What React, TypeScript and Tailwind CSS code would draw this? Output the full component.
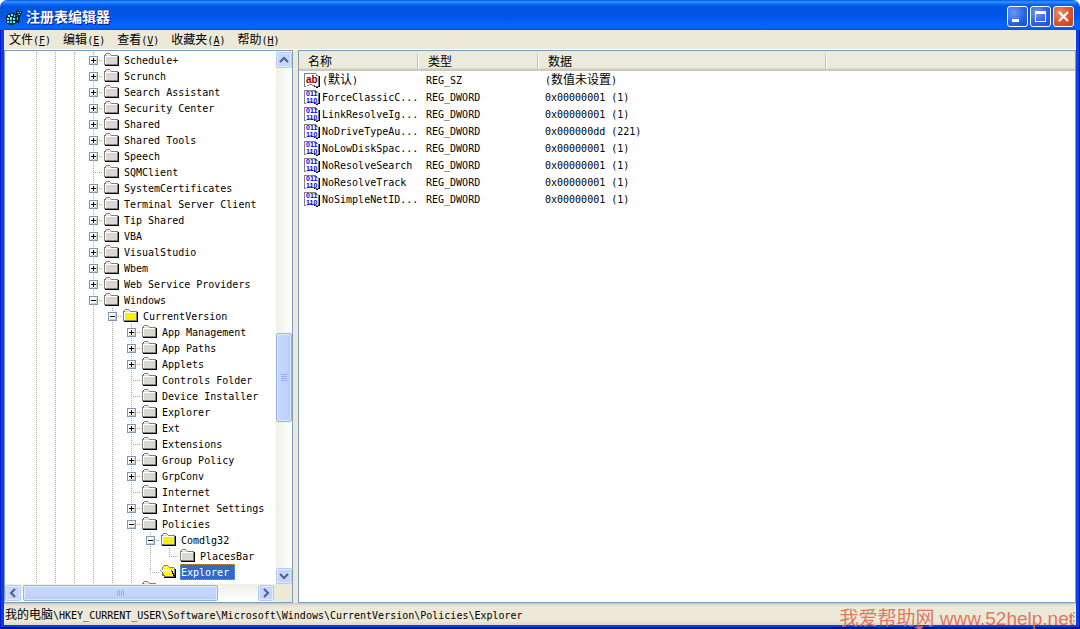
import React, { useId, useState } from 'react';

interface TreeNode {
  label: string;
  level: number;
  toggle?: 'plus' | 'minus';
  last?: boolean;
  open?: boolean;
}

interface RegValue {
  name: string;
  cjk?: boolean;
  type: string;
  data: string;
}

const menus = [
  { label: '文件', hotkey: 'F' },
  { label: '编辑', hotkey: 'E' },
  { label: '查看', hotkey: 'V' },
  { label: '收藏夹', hotkey: 'A' },
  { label: '帮助', hotkey: 'H' },
];

const nodes: TreeNode[] = [
  { label: 'Schedule+', level: 3, toggle: 'plus' },
  { label: 'Scrunch', level: 3, toggle: 'plus' },
  { label: 'Search Assistant', level: 3, toggle: 'plus' },
  { label: 'Security Center', level: 3, toggle: 'plus' },
  { label: 'Shared', level: 3, toggle: 'plus' },
  { label: 'Shared Tools', level: 3, toggle: 'plus' },
  { label: 'Speech', level: 3, toggle: 'plus' },
  { label: 'SQMClient', level: 3 },
  { label: 'SystemCertificates', level: 3, toggle: 'plus' },
  { label: 'Terminal Server Client', level: 3, toggle: 'plus' },
  { label: 'Tip Shared', level: 3, toggle: 'plus' },
  { label: 'VBA', level: 3, toggle: 'plus' },
  { label: 'VisualStudio', level: 3, toggle: 'plus' },
  { label: 'Wbem', level: 3, toggle: 'plus' },
  { label: 'Web Service Providers', level: 3, toggle: 'plus' },
  { label: 'Windows', level: 3, toggle: 'minus' },
  { label: 'CurrentVersion', level: 4, toggle: 'minus' },
  { label: 'App Management', level: 5, toggle: 'plus' },
  { label: 'App Paths', level: 5, toggle: 'plus' },
  { label: 'Applets', level: 5, toggle: 'plus' },
  { label: 'Controls Folder', level: 5 },
  { label: 'Device Installer', level: 5 },
  { label: 'Explorer', level: 5, toggle: 'plus' },
  { label: 'Ext', level: 5, toggle: 'plus' },
  { label: 'Extensions', level: 5 },
  { label: 'Group Policy', level: 5, toggle: 'plus' },
  { label: 'GrpConv', level: 5, toggle: 'plus' },
  { label: 'Internet', level: 5 },
  { label: 'Internet Settings', level: 5, toggle: 'plus' },
  { label: 'Policies', level: 5, toggle: 'minus' },
  { label: 'Comdlg32', level: 6, toggle: 'minus' },
  { label: 'PlacesBar', level: 7, last: true },
  { label: 'Explorer', level: 6, last: true, open: true },
  { label: '', level: 5 },
];

const values: RegValue[] = [
  { name: '默认', cjk: true, type: 'REG_SZ', data: '数值未设置' },
  { name: 'ForceClassicC...', type: 'REG_DWORD', data: '0x00000001 (1)' },
  { name: 'LinkResolveIg...', type: 'REG_DWORD', data: '0x00000001 (1)' },
  { name: 'NoDriveTypeAu...', type: 'REG_DWORD', data: '0x000000dd (221)' },
  { name: 'NoLowDiskSpac...', type: 'REG_DWORD', data: '0x00000001 (1)' },
  { name: 'NoResolveSearch', type: 'REG_DWORD', data: '0x00000001 (1)' },
  { name: 'NoResolveTrack', type: 'REG_DWORD', data: '0x00000001 (1)' },
  { name: 'NoSimpleNetID...', type: 'REG_DWORD', data: '0x00000001 (1)' },
];

const vDots = 'bg-[repeating-linear-gradient(to_bottom,#aca899_0_1px,transparent_1px_2px)]';
const hDots = 'bg-[repeating-linear-gradient(to_right,#aca899_0_1px,transparent_1px_2px)]';

const Cjk: React.FC<{ children: React.ReactNode }> = ({ children }) => (
  <span className="text-[12px]">{children}</span>
);

const AppIcon = () => (
  <svg width="16" height="16" viewBox="0 0 16 16" shapeRendering="crispEdges" aria-hidden="true">
    <path d="M1 6h1V5h2V4h5v1h1v2h1v7h-1v1H8v1H3v-1H1v-1H0V7h1z" fill="#06303a" />
    <path d="M10 2h1V1h2V0h1v2h2v3h-1v2h-1v5h-1v2h-2V6h-1z" fill="#06222e" />
    <path d="M2 6h2v2H2zM5 5h2v2H5zM8 6h1v2H8zM1 9h2v2H1zM4 8h2v3H4zM7 9h2v2H7zM1 12h2v2H1zM4 12h2v2H4zM7 12h2v2H7z" fill="#4fe0e0" />
    <path d="M2 6h1v1H2zM5 5h1v1H5zM4 9h1v1H4zM7 12h1v1H7zM1 9h1v1H1zM7 9h1v1H7z" fill="#e6ffff" />
    <path d="M11 3h2v1h-2zM13 1h1v1h-1zM12 5h2v1h-2zM11 8h1v3h-1zM14 3h1v1h-1z" fill="#35c8cf" />
  </svg>
);

const Folder: React.FC<{ open?: boolean }> = ({ open }) => {
  const dither = useId();

  return (
    <svg width="16" height="16" viewBox="0 0 16 16" shapeRendering="crispEdges" className="shrink-0" aria-hidden="true">
      <defs>
        <pattern id={dither} width="2" height="2" patternUnits="userSpaceOnUse">
          <rect width="2" height="2" fill={open ? '#fff' : '#d8d8d0'} />
          <path d="M0 0h1v1H0zM1 1h1v1H1z" fill="#ffee00" />
        </pattern>
      </defs>
      {open ? (
        <>
          <path d="M15 5h1v9H4v-1h11z" fill="#000" />
          <path d="M2 12V3h1V2h1V1h4v1h1v1h5v1h1v9H4v-1z" fill="#808080" />
          <path d="M3 6V3h1V2h4v1h1v1h5v7h-1V8h-1V6z" fill={`url(#${dither})`} />
          <path d="M0 6h12v1h1v2h1v2h1v2H4v-2H3V9H2V8H1V7H0z" fill="#808080" />
          <path d="M1 6h10v1H1z" fill="#fff" />
          <path d="M2 7h9v1h1v2h1v2H5v-1H4V9H3V8H2z" fill={`url(#${dither})`} />
          <path d="M12 7h1v2h1v2h1v2h-1v-1h-1v-2h-1z" fill="#000" />
        </>
      ) : (
        <>
          <path d="M15 4h1v10H2v-1h13z" fill="#000" />
          <path d="M1 13V3h1V2h1V1h4v1h1v1h7v10z" fill="#808080" />
          <path d="M2 12V4h1V2h4v1h1v1h6v8z" fill="#fff" />
          <path d="M3 12V5h11v7zM3 3h4v1H3z" fill={`url(#${dither})`} />
        </>
      )}
    </svg>
  );
};

const ValueIcon: React.FC<{ text?: boolean }> = ({ text }) => (
  <svg width="16" height="16" viewBox="0 0 16 16" className="shrink-0" aria-hidden="true">
    <g shapeRendering="crispEdges">
      <path d="M14 4h2v11h-2v1h-2v-1h-2v-1h4z" fill="#000" />
      <path d="M0 14V1h12v1h1v1h1v1h1v10h-1v1h-3v-1H8v-1H5v1H2v1H0z" fill="#808080" />
      <path d="M1 14V2h11v2h2v10h-3v-1H8v-1H5v1H3v1z" fill="#fff" />
    </g>
    {text ? (
      <text x="2" y="11" className="fill-[#8b0000] font-['Liberation_Sans',sans-serif] text-[10px] font-bold">
        ab
      </text>
    ) : (
      <g className="fill-[#0000f0] font-['Liberation_Sans',sans-serif] text-[7px] font-bold">
        <text x="2" y="7">011</text>
        <text x="2" y="14">110</text>
      </g>
    )}
  </svg>
);

const Toggle: React.FC<{ kind: 'plus' | 'minus'; label: string }> = ({ kind, label }) => (
  <button
    type="button"
    aria-label={`${kind === 'plus' ? 'Expand' : 'Collapse'} ${label}`}
    className="col-start-1 row-start-1 ml-[5px] mt-1 size-[9px]"
  >
    <svg width="9" height="9" viewBox="0 0 9 9" shapeRendering="crispEdges" className="block">
      <rect width="9" height="9" fill="#7898b5" />
      <rect x="1" y="1" width="7" height="7" fill="#fff" />
      <path d="M7 2h1v6H2V7h5z" fill="#d2cdc0" />
      <path d={kind === 'plus' ? 'M2 4h5v1H2zM4 2h1v5H4z' : 'M2 4h5v1H2z'} fill="#000" />
    </svg>
  </button>
);

const TreeRow: React.FC<{ node: TreeNode; selected: boolean; onSelect: () => void }> = ({ node, selected, onSelect }) => (
  <li className="flex h-4 shrink-0">
    {Array.from({ length: node.level }, (_, i) => (
      <span key={i} className="flex w-[19px] shrink-0 justify-center">
        <span className={`w-px ${vDots}`} />
      </span>
    ))}
    <span className="grid h-4 w-[19px] shrink-0 grid-cols-1 grid-rows-1">
      <span className={`col-start-1 row-start-1 ml-[9px] w-px ${node.last ? 'h-2' : 'h-4'} ${vDots}`} />
      <span className={`col-start-1 row-start-1 ml-[9px] mt-2 h-px ${hDots}`} />
      {node.toggle && <Toggle kind={node.toggle} label={node.label} />}
    </span>
    <Folder open={node.open} />
    {node.label && (
      <button
        type="button"
        onClick={onSelect}
        className={`ml-1 h-4 whitespace-pre pl-px leading-[18px] ${
          selected ? 'bg-[#316ac5] pr-1.5 text-white outline-1 -outline-offset-1 outline-dotted outline-[#ce953a]' : ''
        }`}
      >
        {node.label}
      </button>
    )}
  </li>
);

const ScrollButton: React.FC<{ label: string; path: string }> = ({ label, path }) => (
  <button
    type="button"
    aria-label={label}
    className="flex size-4 shrink-0 items-center justify-center rounded-xs border border-[#b4c8f6] bg-[#c6d5fd] shadow-[inset_0_0_0_1px_#e3ebff]"
  >
    <svg width="10" height="10" viewBox="0 0 10 10" fill="none" stroke="#4d6185" strokeWidth="2">
      <path d={path} />
    </svg>
  </button>
);

const TitleBar = () => (
  <header className="flex h-[30px] shrink-0 items-center rounded-t-[7px] bg-[linear-gradient(to_bottom,#0058e6_0,#3a93ff_2px,#0a6cf5_4px,#0054e3_7px,#0055e5_16px,#0066ff_25px,#0064fa_28px,#0050dc_30px)] px-1.5 pt-[3px]">
    <AppIcon />
    <h1 className="ml-1 flex-1 text-[14px] leading-5 font-bold text-white [text-shadow:1px_1px_#0a1883]">注册表编辑器</h1>
    <div className="flex gap-0.5">
      <button type="button" aria-label="最小化" className="size-[21px] rounded-[3px] border border-white bg-[radial-gradient(circle_at_30%_30%,#6f97f5,#2a5fe6_60%,#1c4fd0)]">
        <svg width="19" height="19" viewBox="0 0 19 19"><path d="M4 12h7v3H4z" fill="#fff" /></svg>
      </button>
      <button type="button" aria-label="最大化" className="size-[21px] rounded-[3px] border border-white bg-[radial-gradient(circle_at_30%_30%,#6f97f5,#2a5fe6_60%,#1c4fd0)]">
        <svg width="19" height="19" viewBox="0 0 19 19"><path d="M4 4h11v11H4zM5 7v7h9V7z" fill="#fff" fillRule="evenodd" /></svg>
      </button>
      <button type="button" aria-label="关闭" className="size-[21px] rounded-[3px] border border-white bg-[radial-gradient(circle_at_30%_30%,#f08b6c,#e0502b_55%,#c83c17)]">
        <svg width="19" height="19" viewBox="0 0 19 19"><path d="M5 5l9 9M14 5l-9 9" stroke="#fff" strokeWidth="2.2" /></svg>
      </button>
    </div>
  </header>
);

const TreePane = () => {
  const [selected, setSelected] = useState(32);

  return (
    <nav className="flex w-[289px] shrink-0 flex-col border border-[#7f9db9] bg-white">
      <div className="flex min-h-0 flex-1">
        <ul className="flex min-w-0 flex-1 flex-col overflow-hidden pl-[22px] pt-px">
          {nodes.map((node, i) => (
            <TreeRow key={i} node={node} selected={i === selected} onSelect={() => setSelected(i)} />
          ))}
        </ul>
        <div className="flex w-4 shrink-0 flex-col bg-[linear-gradient(to_right,#f0f0ea,#fefefb)] pt-px">
          <ScrollButton label="Scroll up" path="M1 7l4-4 4 4" />
          <div className="flex-[265]" />
          <div className="flex flex-[87] flex-col items-center justify-center gap-px rounded-xs border border-[#98b0e8] bg-[linear-gradient(to_right,#cad8fe,#c2d3fe_60%,#b8ccf8)] shadow-[inset_0_0_0_1px_#dfe8ff]">
            {[0, 1, 2, 3].map(n => (
              <span key={n} className="h-px w-1.5 bg-[#8cb0f8]" />
            ))}
          </div>
          <div className="flex-[146]" />
          <ScrollButton label="Scroll down" path="M1 3l4 4 4-4" />
        </div>
      </div>
      <div className="flex h-[18px] shrink-0 bg-[#ece9d8]">
        <div className="flex flex-1 bg-[linear-gradient(to_bottom,#f0f0ea,#fefefb)] py-px">
          <ScrollButton label="Scroll left" path="M7 1L3 5l4 4" />
          <div className="flex-[2]" />
          <div className="flex flex-[195] items-center justify-center gap-px rounded-xs border border-[#98b0e8] bg-[linear-gradient(to_bottom,#cad8fe,#c2d3fe_60%,#b8ccf8)] shadow-[inset_0_0_0_1px_#dfe8ff]">
            {[0, 1, 2, 3].map(n => (
              <span key={n} className="h-1.5 w-px bg-[#8cb0f8]" />
            ))}
          </div>
          <div className="flex-[40]" />
          <ScrollButton label="Scroll right" path="M3 1l4 4-4 4" />
        </div>
        <div className="w-[18px] shrink-0" />
      </div>
    </nav>
  );
};

const ColumnHead: React.FC<{ title: string }> = ({ title }) => (
  <th scope="col" className="p-0 text-left font-normal">
    <div className="flex h-4 items-center border-r border-white pt-0.5 pl-[9px] text-[12px] leading-3.5 shadow-[inset_-1px_0_#c7c5b2]">
      {title}
    </div>
  </th>
);

const ValuePane = () => (
  <main className="min-w-0 flex-1 overflow-hidden border border-[#7f9db9] bg-white">
    <table className="w-full table-fixed border-collapse">
      <colgroup>
        <col className="w-[120px]" />
        <col className="w-[120px]" />
        <col className="w-[288px]" />
        <col />
      </colgroup>
      <thead>
        <tr className="h-5 bg-[linear-gradient(to_bottom,#ebeadb_17px,#e2decd_17px,#d6d2c2_18px,#cbc7b8_19px)]">
          <ColumnHead title="名称" />
          <ColumnHead title="类型" />
          <ColumnHead title="数据" />
          <td />
        </tr>
      </thead>
      <tbody>
        {values.map(value => (
          <tr key={value.name} className="h-[17px] leading-[15px] whitespace-nowrap">
            <td className="p-0">
              <div className="flex h-[17px] items-center pl-[5px]">
                <ValueIcon text={value.cjk} />
                <span className="ml-0.5 pt-0.5">{value.cjk ? <>(<Cjk>{value.name}</Cjk>)</> : value.name}</span>
              </div>
            </td>
            <td className="p-0 pt-0.5 pl-[7px]">{value.type}</td>
            <td className="p-0 pt-0.5 pl-1.5">{value.cjk ? <>(<Cjk>{value.data}</Cjk>)</> : value.data}</td>
            <td />
          </tr>
        ))}
      </tbody>
    </table>
  </main>
);

const App = () => (
  <div className="relative flex h-screen flex-col overflow-hidden font-['DejaVu_Sans_Mono','Noto_Sans_CJK_SC',monospace] text-[10px] text-black">
    <TitleBar />
    <div className="flex min-h-0 flex-1 flex-col border-x-4 border-b-4 border-[#0842dc] bg-[#ece9d8]">
      <div className="flex h-5 shrink-0 items-center gap-3 border-b border-white pt-0.5 pl-[5px]">
        {menus.map(menu => (
          <button key={menu.hotkey} type="button" className="leading-4">
            <Cjk>{menu.label}</Cjk>(<u>{menu.hotkey}</u>)
          </button>
        ))}
      </div>
      <div className="flex min-h-0 flex-1 gap-[5px]">
        <TreePane />
        <ValuePane />
      </div>
      <footer className="flex h-[22px] shrink-0 items-center bg-[linear-gradient(to_bottom,#c5c2b2_0,#e3e0d0_2px,#ece9d8_5px,#ece9d8_18px,#dad7c4_22px)] pl-px leading-4 whitespace-nowrap">
        <p className="flex-1 pt-0.5"><Cjk>我的电脑</Cjk>\HKEY_CURRENT_USER\Software\Microsoft\Windows\CurrentVersion\Policies\Explorer</p>
        <svg width="10" height="10" viewBox="0 0 10 10" fill="#b8b4a2" aria-hidden="true" className="mt-1.5">
          <path d="M7 0h2v2H7zM7 4h2v2H7zM3 4h2v2H3zM7 8h2v2H7zM3 8h2v2H3zM0 8h1v2H0z" />
        </svg>
      </footer>
    </div>
    <div className="absolute inset-x-0 bottom-0 h-0.5 bg-[#00138c]" />
    <div className="absolute top-[30px] right-0 bottom-0 w-px bg-[#00138c]" />
    <div className="absolute top-[30px] bottom-0 left-0 w-px bg-[#0019cf]" />
    <p className="absolute right-1.5 bottom-0 font-['Liberation_Sans','Noto_Sans_CJK_SC',sans-serif] text-[19px] leading-5 whitespace-nowrap text-[#e0674d]/90">
      我爱帮助网 www.52help.net
    </p>
    <svg width="10" height="3" viewBox="0 0 10 3" fill="#f0653a" aria-hidden="true" className="absolute right-[156px] bottom-0">
      <path d="M0 1l9-1v1L7 3H4z" />
    </svg>
  </div>
);

export default App;
